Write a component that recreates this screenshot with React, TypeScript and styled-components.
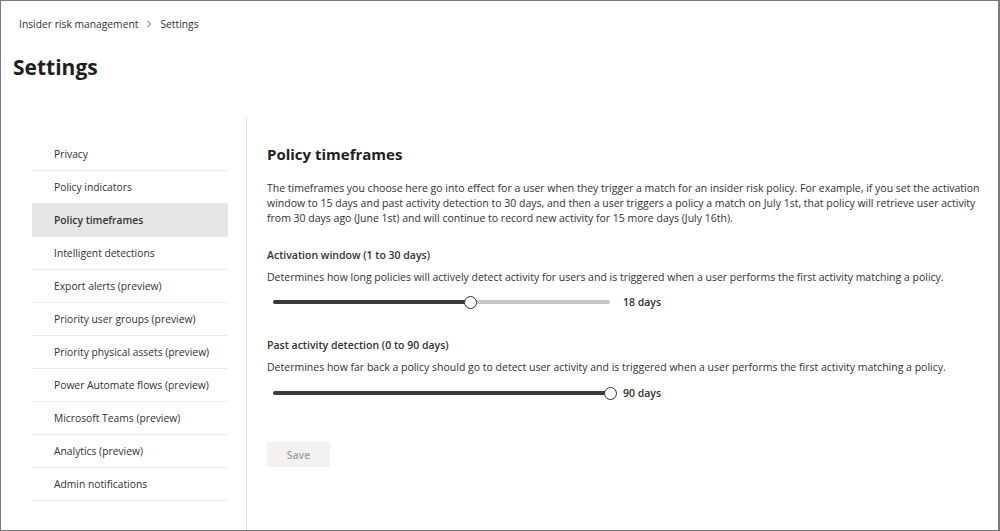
import React from 'react'
import styled, { createGlobalStyle } from 'styled-components'

const GlobalStyle = createGlobalStyle`
  html, body {
    margin: 0;
    padding: 0;
    background: #ffffff;
  }
  body {
    font-family: 'Segoe UI', 'Open Sans', 'Noto Sans', sans-serif;
    color: #323130;
  }
`

const Frame = styled.div`
  width: 1000px;
  height: 531px;
  box-sizing: border-box;
  border: 1px solid #7a7a7a;
  border-right-width: 2px;
  display: flex;
  flex-direction: column;
  overflow: hidden;
`

const Breadcrumb = styled.div`
  display: flex;
  align-items: center;
  gap: 7px;
  padding: 14px 0 0 18px;
  height: 18px;
  font-size: 10.3px;
  color: #323130;
`

const Chevron = styled.svg`
  width: 8px;
  height: 8px;
  color: #605e5c;
`

const Title = styled.h1`
  margin: 0;
  padding: 19px 0 0 12px;
  font-size: 21px;
  font-weight: 700;
  line-height: 30px;
  height: 30px;
  color: #201f1e;
`

const Body = styled.div`
  flex: 1;
  display: flex;
  margin-top: 35px;
`

const Sidebar = styled.nav`
  width: 246px;
  border-right: 1px solid #e1dfdd;
  padding: 21px 0 0 31px;
  box-sizing: border-box;
`

const NavItem = styled.div<{ $active?: boolean }>`
  width: 196px;
  height: 33px;
  display: flex;
  align-items: center;
  padding-left: 22px;
  box-sizing: border-box;
  border-bottom: 1px solid #edebe9;
  font-size: 10.3px;
  font-weight: ${(p) => (p.$active ? 600 : 400)};
  background: ${(p) => (p.$active ? '#e6e6e6' : 'transparent')};
  color: #323130;
`

const Content = styled.main`
  flex: 1;
  padding: 25px 0 0 20px;
`

const Heading = styled.h2`
  margin: 0;
  font-size: 15px;
  font-weight: 700;
  line-height: 24px;
  color: #201f1e;
`

const Paragraph = styled.p`
  margin: 15px 0 0;
  font-size: 10.5px;
  line-height: 15px;
  width: 715px;
  color: #323130;
`

const Section = styled.section<{ $gap: number }>`
  margin-top: ${(p) => p.$gap}px;
`

const Label = styled.div`
  font-size: 10.5px;
  font-weight: 600;
  line-height: 16px;
  color: #323130;
`

const Description = styled.div`
  margin-top: 6px;
  font-size: 10.5px;
  line-height: 16px;
  color: #323130;
`

const SliderRow = styled.div<{ $gap: number }>`
  display: flex;
  align-items: center;
  height: 20px;
  margin-top: ${(p) => p.$gap}px;
  padding-left: 6px;
`

const Track = styled.div`
  position: relative;
  width: 337px;
  height: 4px;
  border-radius: 2px;
  background: #c8c6c4;
`

const Fill = styled.div`
  height: 100%;
  border-radius: 2px;
  background: #3b3a39;
`

const Thumb = styled.div`
  position: absolute;
  top: 50%;
  width: 13px;
  height: 13px;
  box-sizing: border-box;
  margin: -6.5px 0 0 -6.5px;
  border: 1.5px solid #323130;
  border-radius: 50%;
  background: #ffffff;
`

const Value = styled.span`
  margin-left: 13px;
  font-size: 10.5px;
  font-weight: 600;
  color: #323130;
`

const SaveButton = styled.button`
  margin-top: 39px;
  width: 63px;
  height: 25px;
  border: none;
  border-radius: 2px;
  background: #f3f2f1;
  color: #a19f9d;
  font-family: inherit;
  font-size: 10.5px;
  font-weight: 600;
`

const navItems = [
  'Privacy',
  'Policy indicators',
  'Policy timeframes',
  'Intelligent detections',
  'Export alerts (preview)',
  'Priority user groups (preview)',
  'Priority physical assets (preview)',
  'Power Automate flows (preview)',
  'Microsoft Teams (preview)',
  'Analytics (preview)',
  'Admin notifications',
]

const Slider = ({ value, min, max, gap }: { value: number; min: number; max: number; gap: number }) => {
  const pct = ((value - min) / (max - min)) * 100
  return (
    <SliderRow $gap={gap}>
      <Track>
        <Fill style={{ width: `${pct}%` }} />
        <Thumb style={{ left: `${pct}%` }} />
      </Track>
      <Value>{value} days</Value>
    </SliderRow>
  )
}

export default function App() {
  return (
    <>
      <GlobalStyle />
      <Frame>
        <Breadcrumb>
          <span>Insider risk management</span>
          <Chevron viewBox="0 0 8 8" fill="none">
            <path d="M2.5 0.8 L5.7 4 L2.5 7.2" stroke="currentColor" strokeWidth="1" />
          </Chevron>
          <span>Settings</span>
        </Breadcrumb>
        <Title>Settings</Title>
        <Body>
          <Sidebar>
            {navItems.map((item) => (
              <NavItem key={item} $active={item === 'Policy timeframes'}>
                {item}
              </NavItem>
            ))}
          </Sidebar>
          <Content>
            <Heading>Policy timeframes</Heading>
            <Paragraph>
              The timeframes you choose here go into effect for a user when they trigger a match for an insider risk
              policy. For example, if you set the activation window to 15 days and past activity detection to 30 days,
              and then a user triggers a policy a match on July 1st, that policy will retrieve user activity from 30
              days ago (June 1st) and will continue to record new activity for 15 more days (July 16th).
            </Paragraph>
            <Section $gap={21}>
              <Label>Activation window (1 to 30 days)</Label>
              <Description>
                Determines how long policies will actively detect activity for users and is triggered when a user
                performs the first activity matching a policy.
              </Description>
              <Slider value={18} min={1} max={30} gap={7} />
            </Section>
            <Section $gap={25}>
              <Label>Past activity detection (0 to 90 days)</Label>
              <Description>
                Determines how far back a policy should go to detect user activity and is triggered when a user
                performs the first activity matching a policy.
              </Description>
              <Slider value={90} min={0} max={90} gap={8} />
            </Section>
            <SaveButton>Save</SaveButton>
          </Content>
        </Body>
      </Frame>
    </>
  )
}
